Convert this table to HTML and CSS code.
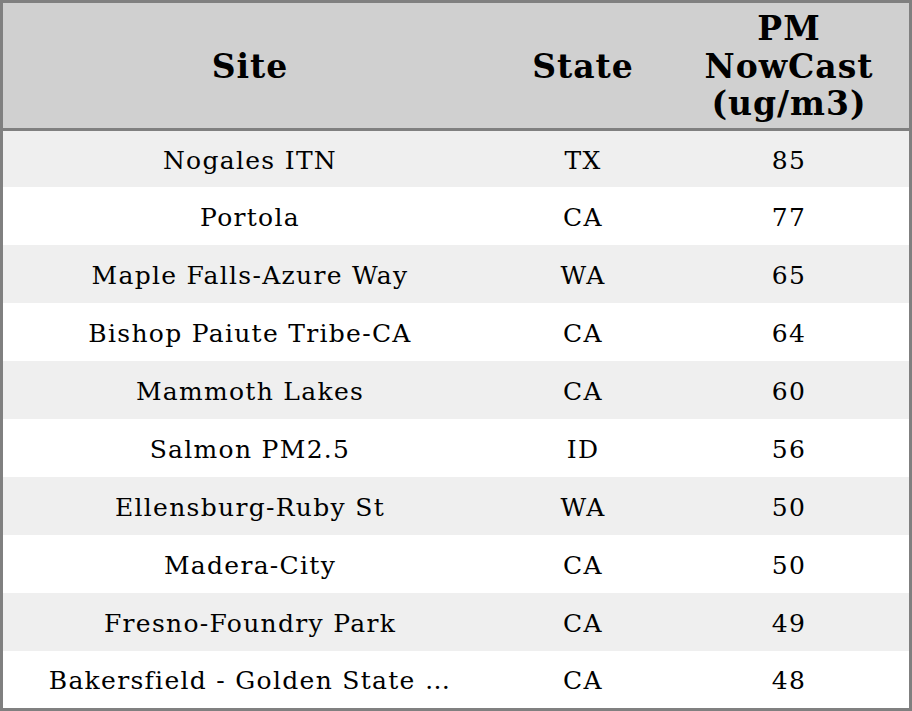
FILE: index.html
```html
<!DOCTYPE html>
<html>
<head>
<meta charset="utf-8">
<link rel="stylesheet" href="styles.css">
</head>
<body>
<div class="table">
  <div class="row head">
    <div class="cell">Site</div>
    <div class="cell">State</div>
    <div class="cell">PM<br>NowCast<br>(ug/m3)</div>
  </div>
  <div class="row odd"><div class="cell">Nogales ITN</div><div class="cell">TX</div><div class="cell">85</div></div>
  <div class="row"><div class="cell">Portola</div><div class="cell">CA</div><div class="cell">77</div></div>
  <div class="row odd"><div class="cell">Maple Falls-Azure Way</div><div class="cell">WA</div><div class="cell">65</div></div>
  <div class="row"><div class="cell">Bishop Paiute Tribe-CA</div><div class="cell">CA</div><div class="cell">64</div></div>
  <div class="row odd"><div class="cell">Mammoth Lakes</div><div class="cell">CA</div><div class="cell">60</div></div>
  <div class="row"><div class="cell">Salmon PM2.5</div><div class="cell">ID</div><div class="cell">56</div></div>
  <div class="row odd"><div class="cell">Ellensburg-Ruby St</div><div class="cell">WA</div><div class="cell">50</div></div>
  <div class="row"><div class="cell">Madera-City</div><div class="cell">CA</div><div class="cell">50</div></div>
  <div class="row odd"><div class="cell">Fresno-Foundry Park</div><div class="cell">CA</div><div class="cell">49</div></div>
  <div class="row"><div class="cell">Bakersfield - Golden State …</div><div class="cell">CA</div><div class="cell">48</div></div>
</div>
</body>
</html>
```
FILE: styles.css
```css
html, body {
  margin: 0;
  padding: 0;
  background: #ffffff;
}
body {
  font-family: "DejaVu Serif", serif;
  color: #000;
}
.table {
  width: 912px;
  height: 711px;
  box-sizing: border-box;
  border: 3px solid #808080;
  display: grid;
  grid-template-rows: 128px 56px repeat(8, 58px) 57px;
}
.row {
  display: grid;
  grid-template-columns: 494px 172px 240px;
  font-size: 25px;
  letter-spacing: 1.3px;
}
.row.odd {
  background: #efefef;
}
.row.head {
  background: #d0d0d0;
  border-bottom: 3px solid #808080;
  font-weight: bold;
  font-size: 33px;
  letter-spacing: 1px;
  line-height: 37.5px;
}
.cell {
  display: flex;
  align-items: center;
  justify-content: center;
  text-align: center;
  white-space: nowrap;
  padding-top: 2px;
}
```
